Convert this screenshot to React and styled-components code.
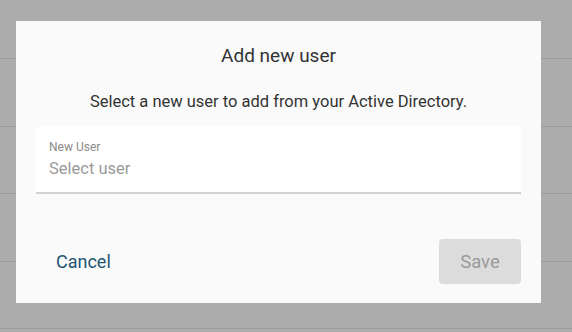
import React from "react"
import styled, { createGlobalStyle } from "styled-components"

const GlobalStyle = createGlobalStyle`
    html, body {
        margin: 0;
        padding: 0;
        background: #acacac;
    }
    body {
        font-family: Roboto, "Noto Sans", sans-serif;
    }
`;

const Backdrop = styled.div`
    width: 572px;
    height: 332px;
    overflow: hidden;
    background-color: #acacac;
    background-image: repeating-linear-gradient(
        to bottom,
        transparent 0,
        transparent 57px,
        #9c9c9c 57px,
        #9c9c9c 58px,
        transparent 58px,
        transparent 67.5px
    );
    background-position: 0 1px;
    padding: 21px 31px 0 16px;
    box-sizing: border-box;
`;

const Dialog = styled.div`
    width: 525px;
    height: 282px;
    background: #fafafa;
    box-sizing: border-box;
    padding: 0 20px;
    display: flex;
    flex-direction: column;
`;

const Title = styled.h2`
    margin: 0;
    padding-top: 23px;
    text-align: center;
    font-size: 19px;
    font-weight: 400;
    color: #333;
    line-height: 24px;
`;

const Subtitle = styled.p`
    margin: 23px 0 0;
    text-align: center;
    font-size: 16.5px;
    color: #333;
    line-height: 22px;
`;

const Field = styled.div`
    margin-top: 13px;
    height: 68px;
    flex-shrink: 0;
    background: #fff;
    border-radius: 4px 4px 0 0;
    border-bottom: 2px solid #d2d2d2;
    box-sizing: border-box;
    padding: 14px 13px 0;
    display: flex;
    flex-direction: column;
`;

const Label = styled.label`
    font-size: 12px;
    color: #8a8a8a;
    line-height: 15px;
`;

const Placeholder = styled.div`
    font-size: 16.5px;
    color: #9a9a9a;
    line-height: 22px;
    margin-top: 3px;
`;

const Actions = styled.div`
    margin-top: 45px;
    display: flex;
    justify-content: space-between;
    align-items: center;
`;

const TextButton = styled.button`
    border: none;
    background: none;
    font-family: inherit;
    font-size: 18px;
    color: #1f5472;
    padding: 0 20px;
    height: 45px;
    cursor: pointer;
`;

const SaveButton = styled.button`
    border: none;
    width: 82px;
    height: 45px;
    border-radius: 4px;
    background: #dcdcdc;
    color: #9a9a9a;
    font-family: inherit;
    font-size: 18.5px;
`;

const App = () =>
<>
    <GlobalStyle />
    <Backdrop>
        <Dialog>
            <Title>Add new user</Title>
            <Subtitle>Select a new user to add from your Active Directory.</Subtitle>
            <Field>
                <Label>New User</Label>
                <Placeholder>Select user</Placeholder>
            </Field>
            <Actions>
                <TextButton>Cancel</TextButton>
                <SaveButton disabled>Save</SaveButton>
            </Actions>
        </Dialog>
    </Backdrop>
</>

export default App;
